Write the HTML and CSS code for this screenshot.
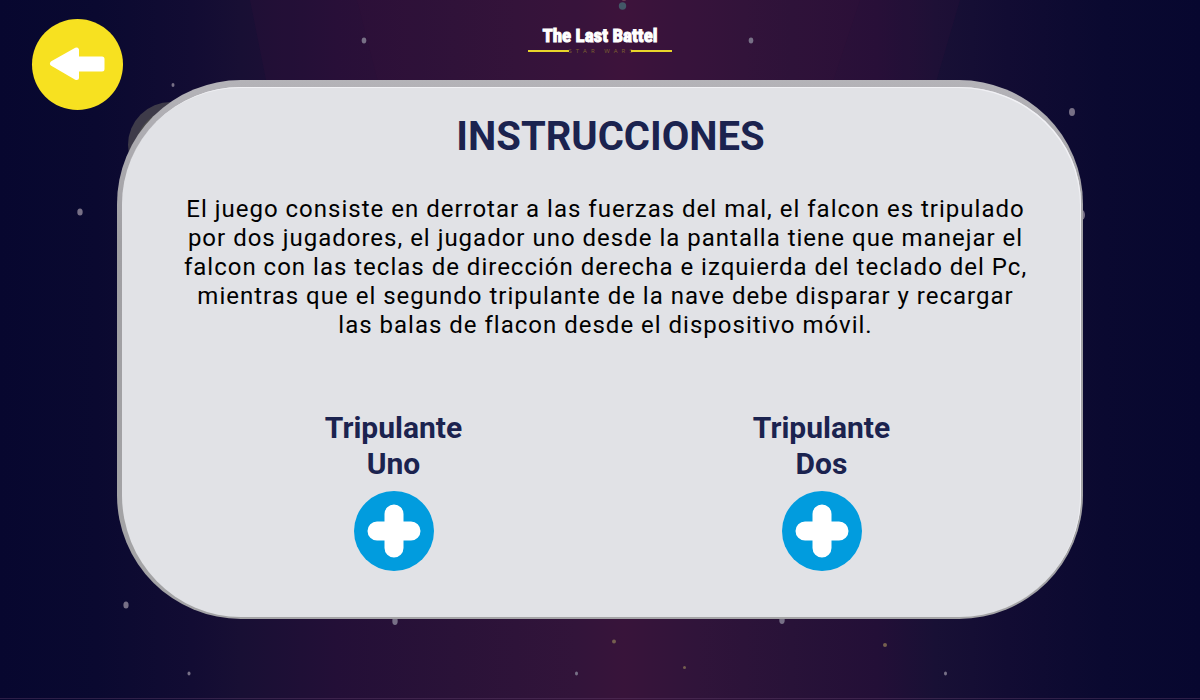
FILE: index.html
```html
<!DOCTYPE html>
<html lang="es">
<head>
<meta charset="utf-8">
<meta name="viewport" content="width=device-width, initial-scale=1">
<title>The Last Battel - Instrucciones</title>
<link rel="stylesheet" href="styles.css">
</head>
<body>
<svg class="sky" viewBox="0 0 1200 700" preserveAspectRatio="none" aria-hidden="true">
  <path d="M250 0H960L925 120L900 420H330L268 90Z" fill="#5a1040" opacity=".1"/>
  <path d="M357 0H860L830 90H380Z" fill="#5a1040" opacity=".05"/>
  <circle cx="171" cy="145" r="43" fill="#3e3b49"/>
  <circle cx="176" cy="150" r="41" fill="#4b4a4b"/>
  <g fill="#777086">
    <ellipse cx="173" cy="85" rx="1.5" ry="2"/>
    <ellipse cx="80" cy="212" rx="2.7" ry="3.5"/>
    <ellipse cx="364" cy="40.500" rx="2.300" ry="3"/>
    <ellipse cx="751" cy="40.500" rx="2.300" ry="3"/>
    <ellipse cx="1072" cy="112" rx="3" ry="4"/>
    <ellipse cx="1082" cy="215" rx="3" ry="5"/>
    <ellipse cx="126" cy="605" rx="2.600" ry="3.500"/>
    <ellipse cx="395" cy="621" rx="2.700" ry="4"/>
    <ellipse cx="782" cy="620" rx="2.700" ry="4"/>
    <ellipse cx="189" cy="673.500" rx="1.500" ry="2"/>
    <ellipse cx="576.500" cy="673.500" rx="1.500" ry="2"/>
    <ellipse cx="945.500" cy="673.500" rx="1.500" ry="2"/>
  </g>
  <g fill="#75604f">
    <circle cx="614" cy="641.500" r="2"/>
    <circle cx="885" cy="645" r="2"/>
    <circle cx="684.500" cy="667.500" r="1.500"/>
  </g>
  <circle cx="622.500" cy="6" r="3.700" fill="#435867"/>
  <ellipse cx="624" cy="0" rx="2" ry="1" fill="#6d4055"/>
  <path d="M0 698.500H1200" stroke="#63406b" opacity=".4"/>
</svg>

<header class="top">
  <button class="back" type="button" aria-label="Volver">
    <svg viewBox="0 0 91 91" aria-hidden="true">
      <path d="M20.500 44.500L44.500 31V40H70V50H44.500V58.500Z" fill="#fff" stroke="#fff" stroke-width="5" stroke-linejoin="round"/>
    </svg>
  </button>
  <div class="logo">
    <span class="logo-name">The Last Battel</span>
    <span class="logo-sub">STAR WARS</span>
  </div>
</header>

<main class="panel">
  <h1 class="title">INSTRUCCIONES</h1>
  <p class="text">El juego consiste en derrotar a las fuerzas del mal, el falcon es tripulado por dos jugadores, el jugador uno desde la pantalla tiene que manejar el falcon con las teclas de dirección derecha e izquierda del teclado del Pc, mientras que el segundo tripulante de la nave debe disparar y recargar las balas de flacon desde el dispositivo móvil.</p>
  <div class="crew">
    <section class="member">
      <h2 class="member-name" id="uno">Tripulante<br>Uno</h2>
      <button class="plus" type="button" aria-labelledby="uno">
        <svg viewBox="0 0 80 80" aria-hidden="true"><path d="M40 23V57M23 40H57" stroke="#fff" stroke-width="19" stroke-linecap="round"/></svg>
      </button>
    </section>
    <section class="member">
      <h2 class="member-name" id="dos">Tripulante<br>Dos</h2>
      <button class="plus" type="button" aria-labelledby="dos">
        <svg viewBox="0 0 80 80" aria-hidden="true"><path d="M40 23V57M23 40H57" stroke="#fff" stroke-width="19" stroke-linecap="round"/></svg>
      </button>
    </section>
  </div>
</main>
</body>
</html>
```
FILE: styles.css
```css
* {
  box-sizing: border-box;
}

body {
  margin: 0;
  min-height: 100vh;
  position: relative;
  padding-bottom: 80px;
  font-family: Roboto, "Liberation Sans", sans-serif;
  background: linear-gradient(90deg, #07072f 0%, #0a0930 8%, #120c33 16%, #180f34 20%, #230f37 28%, #2a1238 38%, #32143a 48%, #38143a 52%, #30143a 58%, #281238 66%, #230f37 73%, #181035 78%, #120c33 84%, #0a0930 92%, #07072f 100%);
}

.sky {
  position: absolute;
  inset: 0;
  width: 100%;
  height: 100%;
  z-index: -1;
}

.top {
  display: flex;
  justify-content: center;
  height: 80px;
  padding-top: 25px;
}

.back {
  position: absolute;
  top: 19px;
  left: 32px;
  width: 91px;
  height: 91px;
  padding: 0;
  border: 0;
  border-radius: 50%;
  background: #f7e120;
  cursor: pointer;
}

.back svg,
.plus svg {
  display: block;
  width: 100%;
}

.logo {
  display: flex;
  flex-direction: column;
  align-items: center;
}

.logo-name {
  font: bold 19px/22px "Liberation Sans Narrow", "Roboto Condensed", Roboto, sans-serif;
  color: #fff;
  -webkit-text-stroke: 1px #fff;
}

.logo-sub {
  display: flex;
  align-items: center;
  font: 6px/8px "Open Sans", sans-serif;
  letter-spacing: 4px;
  color: #7c6030;
}

.logo-sub::before,
.logo-sub::after {
  content: "";
  width: 41px;
  height: 2px;
  background: #e8d52a;
}

.logo-sub::after {
  margin-left: -5px;
}

.panel {
  width: 80.5%;
  margin: 0 auto;
  padding: 26px 40px 46px 48px;
  border: solid transparent;
  border-width: 7px 2px 2px 5px;
  border-radius: 124px;
  background:
    linear-gradient(#e1e2e6, #e1e2e6) padding-box,
    linear-gradient(#b4b3b8, #a09fa3 30%, #a4a4a6) border-box;
  box-shadow: inset -1px 1px 0 #f1f1f5;
  text-align: center;
}

.title {
  margin: 0;
  font-size: 40px;
  line-height: 48px;
  color: #1b234f;
  padding-left: 10px;
}

.text {
  max-width: 848px;
  margin: 34px auto 0;
  font-size: 24px;
  line-height: 29px;
  letter-spacing: 1px;
  color: #000;
}

.crew {
  display: grid;
  grid-template-columns: 1fr 1fr;
  max-width: 860px;
  margin: 70px auto 0;
  padding-left: 4px;
}

.member {
  display: flex;
  flex-direction: column;
  align-items: center;
}

.member-name {
  margin: 0 0 9px;
  font-size: 30px;
  line-height: 36px;
  color: #1b234f;
}

.plus {
  width: 80px;
  height: 80px;
  padding: 0;
  border: 0;
  border-radius: 50%;
  background: #019cde;
  cursor: pointer;
}
```
